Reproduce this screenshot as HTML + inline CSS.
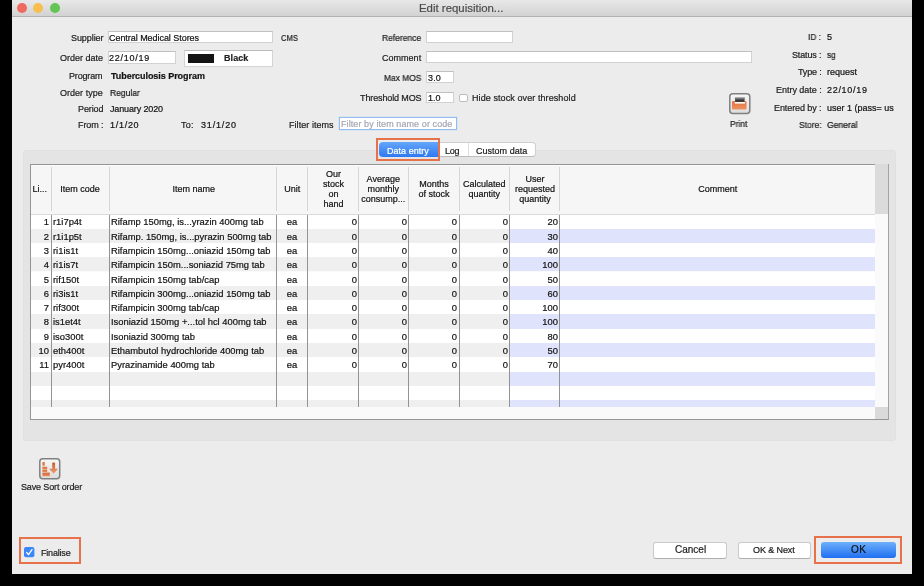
<!DOCTYPE html>
<html><head><meta charset="utf-8"><style>
html,body{margin:0;padding:0;}
body{width:924px;height:586px;background:#000;position:relative;overflow:hidden;font-family:"Liberation Sans",sans-serif;}
.r{position:absolute;}
.t{position:absolute;white-space:nowrap;will-change:transform;-webkit-text-stroke-width:0.2px;}
.hd{position:absolute;display:flex;align-items:center;justify-content:center;font-size:9px;line-height:10px;color:#111;box-sizing:border-box;will-change:transform;-webkit-text-stroke-width:0.2px}
.hd>div{width:100%}
</style></head><body>
<div class="r" style="left:12px;top:0px;width:900.00px;height:574.00px;background:#ececec"></div>
<div class="r" style="left:12px;top:0px;width:900.00px;height:17.00px;background:linear-gradient(#e8e8e8,#d2d2d2);border-bottom:1px solid #b2b2b2;box-sizing:border-box"></div>
<div class="r" style="left:16.50px;top:2.9px;width:10.2px;height:10.2px;border-radius:50%;background:#ef6a5e;"></div>
<div class="r" style="left:33.30px;top:2.9px;width:10.2px;height:10.2px;border-radius:50%;background:#f6bf50;"></div>
<div class="r" style="left:49.90px;top:2.9px;width:10.2px;height:10.2px;border-radius:50%;background:#62c554;"></div>
<div class="t" style="left:418.70px;top:3px;font-size:11.4px;line-height:11.4px;font-weight:400;color:#4b4b4b;letter-spacing:0.009px;">Edit requisition...</div>
<div class="t" style="left:70.80px;top:34px;font-size:9px;line-height:9px;font-weight:400;color:#1c1c1c;letter-spacing:-0.076px;">Supplier</div>
<div class="t" style="left:60.30px;top:54px;font-size:9px;line-height:9px;font-weight:400;color:#1c1c1c;letter-spacing:-0.002px;">Order date</div>
<div class="t" style="left:69.00px;top:72px;font-size:9px;line-height:9px;font-weight:400;color:#1c1c1c;letter-spacing:-0.162px;">Program</div>
<div class="t" style="left:60.30px;top:89px;font-size:9px;line-height:9px;font-weight:400;color:#1c1c1c;letter-spacing:0.024px;">Order type</div>
<div class="t" style="left:77.50px;top:105px;font-size:9px;line-height:9px;font-weight:400;color:#1c1c1c;letter-spacing:-0.102px;">Period</div>
<div class="t" style="left:77.50px;top:121px;font-size:9px;line-height:9px;font-weight:400;color:#1c1c1c;letter-spacing:-0.102px;">From :</div>
<div class="r" style="left:107.5px;top:31.3px;width:165.50px;height:12.10px;background:#fff;border:1px solid #d2d2d2;border-top-color:#c0c0c0;box-sizing:border-box"></div>
<div class="t" style="left:109.20px;top:34px;font-size:9px;line-height:9px;font-weight:400;color:#111111;letter-spacing:-0.047px;">Central Medical Stores</div>
<div class="t" style="left:281.30px;top:34px;font-size:9px;line-height:9px;font-weight:400;color:#1c1c1c;transform:scaleX(0.8509);transform-origin:0 0;">CMS</div>
<div class="r" style="left:107.5px;top:51.3px;width:68.00px;height:12.30px;background:#fff;border:1px solid #d2d2d2;border-top-color:#c0c0c0;box-sizing:border-box"></div>
<div class="t" style="left:109.20px;top:54px;font-size:9px;line-height:9px;font-weight:400;color:#111111;letter-spacing:0.756px;">22/10/19</div>
<div class="r" style="left:184px;top:50px;width:89.00px;height:17.00px;background:#fff;border:1px solid #d4d4d4;border-top-color:#bcbcbc;box-sizing:border-box"></div>
<div class="r" style="left:188px;top:54px;width:26.00px;height:9.00px;background:#141414"></div>
<div class="t" style="left:223.70px;top:54px;font-size:9px;line-height:9px;font-weight:700;color:#222;letter-spacing:0.068px;">Black</div>
<div class="t" style="left:110.80px;top:72px;font-size:9px;line-height:9px;font-weight:700;color:#111111;letter-spacing:-0.051px;">Tuberculosis Program</div>
<div class="t" style="left:109.70px;top:89px;font-size:9px;line-height:9px;font-weight:400;color:#111111;transform:scaleX(0.9460);transform-origin:0 0;">Regular</div>
<div class="t" style="left:109.70px;top:105px;font-size:9px;line-height:9px;font-weight:400;color:#111111;letter-spacing:-0.131px;">January 2020</div>
<div class="t" style="left:109.70px;top:121px;font-size:9px;line-height:9px;font-weight:400;color:#111111;letter-spacing:0.716px;">1/1/20</div>
<div class="t" style="left:180.80px;top:121px;font-size:9px;line-height:9px;font-weight:400;color:#1c1c1c;letter-spacing:0.265px;">To:</div>
<div class="t" style="left:200.80px;top:121px;font-size:9px;line-height:9px;font-weight:400;color:#111111;letter-spacing:0.823px;">31/1/20</div>
<div class="t" style="left:288.70px;top:121px;font-size:9px;line-height:9px;font-weight:400;color:#1c1c1c;letter-spacing:0.054px;">Filter items</div>
<div class="r" style="left:338.5px;top:117.4px;width:118.70px;height:12.90px;background:#fff;border:1px solid #94bbee;box-shadow:0 0 0 0.6px #cddff5;box-sizing:border-box"></div>
<div class="t" style="left:340.60px;top:120px;font-size:9px;line-height:9px;font-weight:400;color:#a3a6b3;letter-spacing:0.089px;">Filter by item name or code</div>
<div class="t" style="left:381.70px;top:34px;font-size:9px;line-height:9px;font-weight:400;color:#1c1c1c;transform:scaleX(0.9424);transform-origin:0 0;">Reference</div>
<div class="t" style="left:381.80px;top:54px;font-size:9px;line-height:9px;font-weight:400;color:#1c1c1c;letter-spacing:0.023px;">Comment</div>
<div class="t" style="left:383.70px;top:74px;font-size:9px;line-height:9px;font-weight:400;color:#1c1c1c;transform:scaleX(0.9334);transform-origin:0 0;">Max MOS</div>
<div class="t" style="left:359.70px;top:94px;font-size:9px;line-height:9px;font-weight:400;color:#1c1c1c;letter-spacing:-0.117px;">Threshold MOS</div>
<div class="r" style="left:426.3px;top:31.3px;width:86.70px;height:12.10px;background:#fff;border:1px solid #d2d2d2;border-top-color:#c0c0c0;box-sizing:border-box"></div>
<div class="r" style="left:426.3px;top:51.2px;width:325.70px;height:12.30px;background:#fff;border:1px solid #d2d2d2;border-top-color:#c0c0c0;box-sizing:border-box"></div>
<div class="r" style="left:426.3px;top:71.4px;width:27.30px;height:12.10px;background:#fff;border:1px solid #d2d2d2;border-top-color:#c0c0c0;box-sizing:border-box"></div>
<div class="t" style="left:427.50px;top:74px;font-size:9px;line-height:9px;font-weight:400;color:#111111;letter-spacing:0.145px;">3.0</div>
<div class="r" style="left:426.3px;top:91.6px;width:27.30px;height:11.80px;background:#fff;border:1px solid #d2d2d2;border-top-color:#c0c0c0;box-sizing:border-box"></div>
<div class="t" style="left:427.90px;top:94px;font-size:9px;line-height:9px;font-weight:400;color:#111111;letter-spacing:-0.055px;">1.0</div>
<div class="r" style="left:459.4px;top:93.8px;width:8.20px;height:7.80px;background:#fff;border:1px solid #bdbdbd;border-radius:2px;box-sizing:border-box"></div>
<div class="t" style="left:471.50px;top:94px;font-size:9px;line-height:9px;font-weight:400;color:#1c1c1c;letter-spacing:0.087px;">Hide stock over threshold</div>
<div class="t" style="left:808.30px;top:33px;font-size:9px;line-height:9px;font-weight:400;color:#1c1c1c;transform:scaleX(0.9259);transform-origin:0 0;">ID :</div>
<div class="t" style="left:826.60px;top:33px;font-size:9px;line-height:9px;font-weight:400;color:#111111;letter-spacing:0.000px;">5</div>
<div class="t" style="left:791.80px;top:51px;font-size:9px;line-height:9px;font-weight:400;color:#1c1c1c;letter-spacing:-0.144px;">Status :</div>
<div class="t" style="left:826.60px;top:51px;font-size:9px;line-height:9px;font-weight:400;color:#111111;transform:scaleX(0.9119);transform-origin:0 0;">sg</div>
<div class="t" style="left:797.60px;top:68px;font-size:9px;line-height:9px;font-weight:400;color:#1c1c1c;letter-spacing:-0.156px;">Type :</div>
<div class="t" style="left:826.60px;top:68px;font-size:9px;line-height:9px;font-weight:400;color:#111111;letter-spacing:0.007px;">request</div>
<div class="t" style="left:775.60px;top:86px;font-size:9px;line-height:9px;font-weight:400;color:#1c1c1c;letter-spacing:-0.026px;">Entry date :</div>
<div class="t" style="left:826.60px;top:86px;font-size:9px;line-height:9px;font-weight:400;color:#111111;letter-spacing:0.699px;">22/10/19</div>
<div class="t" style="left:773.70px;top:104px;font-size:9px;line-height:9px;font-weight:400;color:#1c1c1c;letter-spacing:-0.083px;">Entered by :</div>
<div class="t" style="left:826.60px;top:104px;width:300px;font-size:9px;line-height:9px;font-weight:400;color:#111111;text-align:left;width:67px;overflow:hidden">user 1 (pass= us</div>
<div class="t" style="left:798.60px;top:121px;font-size:9px;line-height:9px;font-weight:400;color:#1c1c1c;transform:scaleX(0.9447);transform-origin:0 0;">Store:</div>
<div class="t" style="left:826.60px;top:121px;font-size:9px;line-height:9px;font-weight:400;color:#111111;transform:scaleX(0.9519);transform-origin:0 0;">General</div>
<svg class="r" style="left:729px;top:93px" width="22" height="22" viewBox="0 0 22 22">
<defs><linearGradient id="bx" x1="0" y1="0" x2="0" y2="1"><stop offset="0" stop-color="#f7f7f7"/><stop offset="1" stop-color="#dcdcdc"/></linearGradient>
<linearGradient id="sl" x1="0" y1="0" x2="0" y2="1"><stop offset="0" stop-color="#a0a0a0"/><stop offset="1" stop-color="#0e0e0e"/></linearGradient>
<linearGradient id="or" x1="0" y1="0" x2="0" y2="1"><stop offset="0" stop-color="#e27440"/><stop offset="1" stop-color="#ee9263"/></linearGradient></defs>
<rect x="0.8" y="0.8" width="20" height="19.8" rx="3" fill="url(#bx)" stroke="#808080" stroke-width="1.5"/>
<rect x="3" y="8" width="14.5" height="8.6" rx="1" fill="url(#or)"/>
<rect x="5.8" y="8.7" width="10.1" height="1.9" fill="#fff"/>
<path d="M5.8 4.2 H15.9 L15.5 8.7 H6.2 Z" fill="url(#sl)"/>
</svg>
<div class="t" style="left:730.40px;top:120px;font-size:9px;line-height:9px;font-weight:400;color:#1c1c1c;transform:scaleX(0.9385);transform-origin:0 0;">Print</div>
<div class="r" style="left:22.5px;top:149.6px;width:873.10px;height:291.00px;background:#e4e4e4;border-radius:4px;box-shadow:inset 0 0 0 1px #e0e0e0"></div>
<div class="r" style="left:437px;top:142px;width:99.00px;height:15.00px;background:#fff;border:1px solid #cfcfcf;border-bottom-color:#bdbdbd;border-radius:0 4px 4px 0;box-sizing:border-box"></div>
<div class="r" style="left:468px;top:143px;width:1.00px;height:13.00px;background:#dedede"></div>
<div class="r" style="left:379px;top:142px;width:59.00px;height:15.00px;background:linear-gradient(#64a6fa,#2f78f2);border-radius:4px 0 0 4px"></div>
<div class="t" style="left:386.60px;top:147px;font-size:9px;line-height:9px;font-weight:400;color:#fff;letter-spacing:0.034px;">Data entry</div>
<div class="t" style="left:445.00px;top:147px;font-size:9px;line-height:9px;font-weight:400;color:#1a1a1a;letter-spacing:-0.215px;">Log</div>
<div class="t" style="left:476.20px;top:147px;font-size:9px;line-height:9px;font-weight:400;color:#1a1a1a;letter-spacing:0.017px;">Custom data</div>
<div class="r" style="left:376px;top:138px;width:64.00px;height:23.00px;border:2px solid #e6714a;box-sizing:border-box"></div>
<div class="r" style="left:30px;top:164px;width:845.00px;height:256.00px;background:#fafafa;border:1px solid #959595;border-right:none;box-sizing:border-box"></div>
<div class="r" style="left:875px;top:164px;width:14.00px;height:256.00px;background:#fafafa;border-right:1.5px solid #a3a3a3;border-bottom:1px solid #959595;box-sizing:border-box"></div>
<div class="r" style="left:31px;top:165px;width:844.00px;height:49.00px;background:#f6f6f6"></div>
<div class="r" style="left:31px;top:165px;width:844.00px;height:1.00px;background:#fbfbfb"></div>
<div class="r" style="left:875px;top:164px;width:12.50px;height:50.00px;background:#dbdbdb"></div>
<div class="r" style="left:50.8px;top:167px;width:1.00px;height:44.00px;background:#d6d6d6"></div>
<div class="r" style="left:109.0px;top:167px;width:1.00px;height:44.00px;background:#d6d6d6"></div>
<div class="r" style="left:276.3px;top:167px;width:1.00px;height:44.00px;background:#d6d6d6"></div>
<div class="r" style="left:307.0px;top:167px;width:1.00px;height:44.00px;background:#d6d6d6"></div>
<div class="r" style="left:357.8px;top:167px;width:1.00px;height:44.00px;background:#d6d6d6"></div>
<div class="r" style="left:408.3px;top:167px;width:1.00px;height:44.00px;background:#d6d6d6"></div>
<div class="r" style="left:458.5px;top:167px;width:1.00px;height:44.00px;background:#d6d6d6"></div>
<div class="r" style="left:509.0px;top:167px;width:1.00px;height:44.00px;background:#d6d6d6"></div>
<div class="r" style="left:559.0px;top:167px;width:1.00px;height:44.00px;background:#d6d6d6"></div>
<div class="hd" style="left:31px;top:165px;width:20.299999999999997px;height:48px;text-align:left;padding-left:1.5px;"><div>Li...</div></div>
<div class="hd" style="left:51.3px;top:165px;width:58.2px;height:48px;text-align:center;"><div>Item code</div></div>
<div class="hd" style="left:109.5px;top:165px;width:167.3px;height:48px;text-align:center;"><div>Item name</div></div>
<div class="hd" style="left:276.8px;top:165px;width:30.69999999999999px;height:48px;text-align:center;"><div>Unit</div></div>
<div class="hd" style="left:307.5px;top:165px;width:50.80000000000001px;height:48px;text-align:center;"><div>Our<br>stock<br>on<br>hand</div></div>
<div class="hd" style="left:358.3px;top:165px;width:50.5px;height:48px;text-align:center;"><div>Average<br>monthly<br>consump...</div></div>
<div class="hd" style="left:408.8px;top:165px;width:50.19999999999999px;height:48px;text-align:center;"><div>Months<br>of stock</div></div>
<div class="hd" style="left:459px;top:165px;width:50.5px;height:48px;text-align:center;"><div>Calculated<br>quantity</div></div>
<div class="hd" style="left:509.5px;top:165px;width:50.0px;height:48px;text-align:center;"><div>User<br>requested<br>quantity</div></div>
<div class="hd" style="left:559.5px;top:165px;width:315.5px;height:48px;text-align:center;"><div>Comment</div></div>
<div class="r" style="left:31px;top:214px;width:844px;height:193px;overflow:hidden">
<div class="r" style="left:0;top:0.30px;width:478.5px;height:14.30px;background:#ffffff"></div>
<div class="r" style="left:478.5px;top:0.30px;width:365.5px;height:14.30px;background:#ffffff"></div>
<div class="r" style="left:0;top:14.60px;width:478.5px;height:14.30px;background:#efefef"></div>
<div class="r" style="left:478.5px;top:14.60px;width:365.5px;height:14.30px;background:#dfe3fb"></div>
<div class="r" style="left:0;top:28.90px;width:478.5px;height:14.30px;background:#ffffff"></div>
<div class="r" style="left:478.5px;top:28.90px;width:365.5px;height:14.30px;background:#ffffff"></div>
<div class="r" style="left:0;top:43.20px;width:478.5px;height:14.30px;background:#efefef"></div>
<div class="r" style="left:478.5px;top:43.20px;width:365.5px;height:14.30px;background:#dfe3fb"></div>
<div class="r" style="left:0;top:57.50px;width:478.5px;height:14.30px;background:#ffffff"></div>
<div class="r" style="left:478.5px;top:57.50px;width:365.5px;height:14.30px;background:#ffffff"></div>
<div class="r" style="left:0;top:71.80px;width:478.5px;height:14.30px;background:#efefef"></div>
<div class="r" style="left:478.5px;top:71.80px;width:365.5px;height:14.30px;background:#dfe3fb"></div>
<div class="r" style="left:0;top:86.10px;width:478.5px;height:14.30px;background:#ffffff"></div>
<div class="r" style="left:478.5px;top:86.10px;width:365.5px;height:14.30px;background:#ffffff"></div>
<div class="r" style="left:0;top:100.40px;width:478.5px;height:14.30px;background:#efefef"></div>
<div class="r" style="left:478.5px;top:100.40px;width:365.5px;height:14.30px;background:#dfe3fb"></div>
<div class="r" style="left:0;top:114.70px;width:478.5px;height:14.30px;background:#ffffff"></div>
<div class="r" style="left:478.5px;top:114.70px;width:365.5px;height:14.30px;background:#ffffff"></div>
<div class="r" style="left:0;top:129.00px;width:478.5px;height:14.30px;background:#efefef"></div>
<div class="r" style="left:478.5px;top:129.00px;width:365.5px;height:14.30px;background:#dfe3fb"></div>
<div class="r" style="left:0;top:143.30px;width:478.5px;height:14.30px;background:#ffffff"></div>
<div class="r" style="left:478.5px;top:143.30px;width:365.5px;height:14.30px;background:#ffffff"></div>
<div class="r" style="left:0;top:157.60px;width:478.5px;height:14.30px;background:#efefef"></div>
<div class="r" style="left:478.5px;top:157.60px;width:365.5px;height:14.30px;background:#dfe3fb"></div>
<div class="r" style="left:0;top:171.90px;width:478.5px;height:14.30px;background:#ffffff"></div>
<div class="r" style="left:478.5px;top:171.90px;width:365.5px;height:14.30px;background:#ffffff"></div>
<div class="r" style="left:0;top:186.20px;width:478.5px;height:14.30px;background:#efefef"></div>
<div class="r" style="left:478.5px;top:186.20px;width:365.5px;height:14.30px;background:#dfe3fb"></div>
<div class="r" style="left:19.80px;top:0;width:1px;height:193px;background:#939393"></div>
<div class="r" style="left:78.00px;top:0;width:1px;height:193px;background:#939393"></div>
<div class="r" style="left:245.30px;top:0;width:1px;height:193px;background:#939393"></div>
<div class="r" style="left:276.00px;top:0;width:1px;height:193px;background:#939393"></div>
<div class="r" style="left:326.80px;top:0;width:1px;height:193px;background:#939393"></div>
<div class="r" style="left:377.30px;top:0;width:1px;height:193px;background:#939393"></div>
<div class="r" style="left:427.50px;top:0;width:1px;height:193px;background:#939393"></div>
<div class="r" style="left:478.00px;top:0;width:1px;height:193px;background:#939393"></div>
<div class="r" style="left:528.00px;top:0;width:1px;height:193px;background:#939393"></div>
</div>
<div class="r" style="left:31px;top:214px;width:844.00px;height:1.00px;background:#d9d9d9"></div>
<div class="t" style="left:31.40px;top:217px;width:18px;font-size:9.4px;line-height:9.4px;font-weight:400;color:#111111;text-align:right;">1</div>
<div class="t" style="left:53.30px;top:217px;width:300px;font-size:9.4px;line-height:9.4px;font-weight:400;color:#111111;text-align:left;">r1i7p4t</div>
<div class="t" style="left:111.30px;top:217px;width:300px;font-size:9.4px;line-height:9.4px;font-weight:400;color:#111111;text-align:left;">Rifamp 150mg, is...yrazin 400mg tab</div>
<div class="t" style="left:277.20px;top:217px;width:30px;font-size:9.4px;line-height:9.4px;font-weight:400;color:#111111;text-align:center;">ea</div>
<div class="t" style="left:326.60px;top:217px;width:30px;font-size:9.4px;line-height:9.4px;font-weight:400;color:#111111;text-align:right;">0</div>
<div class="t" style="left:377.00px;top:217px;width:30px;font-size:9.4px;line-height:9.4px;font-weight:400;color:#111111;text-align:right;">0</div>
<div class="t" style="left:427.20px;top:217px;width:30px;font-size:9.4px;line-height:9.4px;font-weight:400;color:#111111;text-align:right;">0</div>
<div class="t" style="left:477.80px;top:217px;width:30px;font-size:9.4px;line-height:9.4px;font-weight:400;color:#111111;text-align:right;">0</div>
<div class="t" style="left:518.30px;top:217px;width:40px;font-size:9.4px;line-height:9.4px;font-weight:400;color:#111111;text-align:right;">20</div>
<div class="t" style="left:31.40px;top:232px;width:18px;font-size:9.4px;line-height:9.4px;font-weight:400;color:#111111;text-align:right;">2</div>
<div class="t" style="left:53.30px;top:232px;width:300px;font-size:9.4px;line-height:9.4px;font-weight:400;color:#111111;text-align:left;">r1i1p5t</div>
<div class="t" style="left:111.30px;top:232px;width:300px;font-size:9.4px;line-height:9.4px;font-weight:400;color:#111111;text-align:left;">Rifamp. 150mg, is...pyrazin 500mg tab</div>
<div class="t" style="left:277.20px;top:232px;width:30px;font-size:9.4px;line-height:9.4px;font-weight:400;color:#111111;text-align:center;">ea</div>
<div class="t" style="left:326.60px;top:232px;width:30px;font-size:9.4px;line-height:9.4px;font-weight:400;color:#111111;text-align:right;">0</div>
<div class="t" style="left:377.00px;top:232px;width:30px;font-size:9.4px;line-height:9.4px;font-weight:400;color:#111111;text-align:right;">0</div>
<div class="t" style="left:427.20px;top:232px;width:30px;font-size:9.4px;line-height:9.4px;font-weight:400;color:#111111;text-align:right;">0</div>
<div class="t" style="left:477.80px;top:232px;width:30px;font-size:9.4px;line-height:9.4px;font-weight:400;color:#111111;text-align:right;">0</div>
<div class="t" style="left:518.30px;top:232px;width:40px;font-size:9.4px;line-height:9.4px;font-weight:400;color:#111111;text-align:right;">30</div>
<div class="t" style="left:31.40px;top:246px;width:18px;font-size:9.4px;line-height:9.4px;font-weight:400;color:#111111;text-align:right;">3</div>
<div class="t" style="left:53.30px;top:246px;width:300px;font-size:9.4px;line-height:9.4px;font-weight:400;color:#111111;text-align:left;">ri1is1t</div>
<div class="t" style="left:111.30px;top:246px;width:300px;font-size:9.4px;line-height:9.4px;font-weight:400;color:#111111;text-align:left;">Rifampicin 150mg...oniazid 150mg tab</div>
<div class="t" style="left:277.20px;top:246px;width:30px;font-size:9.4px;line-height:9.4px;font-weight:400;color:#111111;text-align:center;">ea</div>
<div class="t" style="left:326.60px;top:246px;width:30px;font-size:9.4px;line-height:9.4px;font-weight:400;color:#111111;text-align:right;">0</div>
<div class="t" style="left:377.00px;top:246px;width:30px;font-size:9.4px;line-height:9.4px;font-weight:400;color:#111111;text-align:right;">0</div>
<div class="t" style="left:427.20px;top:246px;width:30px;font-size:9.4px;line-height:9.4px;font-weight:400;color:#111111;text-align:right;">0</div>
<div class="t" style="left:477.80px;top:246px;width:30px;font-size:9.4px;line-height:9.4px;font-weight:400;color:#111111;text-align:right;">0</div>
<div class="t" style="left:518.30px;top:246px;width:40px;font-size:9.4px;line-height:9.4px;font-weight:400;color:#111111;text-align:right;">40</div>
<div class="t" style="left:31.40px;top:260px;width:18px;font-size:9.4px;line-height:9.4px;font-weight:400;color:#111111;text-align:right;">4</div>
<div class="t" style="left:53.30px;top:260px;width:300px;font-size:9.4px;line-height:9.4px;font-weight:400;color:#111111;text-align:left;">ri1is7t</div>
<div class="t" style="left:111.30px;top:260px;width:300px;font-size:9.4px;line-height:9.4px;font-weight:400;color:#111111;text-align:left;">Rifampicin 150m...soniazid 75mg tab</div>
<div class="t" style="left:277.20px;top:260px;width:30px;font-size:9.4px;line-height:9.4px;font-weight:400;color:#111111;text-align:center;">ea</div>
<div class="t" style="left:326.60px;top:260px;width:30px;font-size:9.4px;line-height:9.4px;font-weight:400;color:#111111;text-align:right;">0</div>
<div class="t" style="left:377.00px;top:260px;width:30px;font-size:9.4px;line-height:9.4px;font-weight:400;color:#111111;text-align:right;">0</div>
<div class="t" style="left:427.20px;top:260px;width:30px;font-size:9.4px;line-height:9.4px;font-weight:400;color:#111111;text-align:right;">0</div>
<div class="t" style="left:477.80px;top:260px;width:30px;font-size:9.4px;line-height:9.4px;font-weight:400;color:#111111;text-align:right;">0</div>
<div class="t" style="left:518.30px;top:260px;width:40px;font-size:9.4px;line-height:9.4px;font-weight:400;color:#111111;text-align:right;">100</div>
<div class="t" style="left:31.40px;top:275px;width:18px;font-size:9.4px;line-height:9.4px;font-weight:400;color:#111111;text-align:right;">5</div>
<div class="t" style="left:53.30px;top:275px;width:300px;font-size:9.4px;line-height:9.4px;font-weight:400;color:#111111;text-align:left;">rif150t</div>
<div class="t" style="left:111.30px;top:275px;width:300px;font-size:9.4px;line-height:9.4px;font-weight:400;color:#111111;text-align:left;">Rifampicin 150mg tab/cap</div>
<div class="t" style="left:277.20px;top:275px;width:30px;font-size:9.4px;line-height:9.4px;font-weight:400;color:#111111;text-align:center;">ea</div>
<div class="t" style="left:326.60px;top:275px;width:30px;font-size:9.4px;line-height:9.4px;font-weight:400;color:#111111;text-align:right;">0</div>
<div class="t" style="left:377.00px;top:275px;width:30px;font-size:9.4px;line-height:9.4px;font-weight:400;color:#111111;text-align:right;">0</div>
<div class="t" style="left:427.20px;top:275px;width:30px;font-size:9.4px;line-height:9.4px;font-weight:400;color:#111111;text-align:right;">0</div>
<div class="t" style="left:477.80px;top:275px;width:30px;font-size:9.4px;line-height:9.4px;font-weight:400;color:#111111;text-align:right;">0</div>
<div class="t" style="left:518.30px;top:275px;width:40px;font-size:9.4px;line-height:9.4px;font-weight:400;color:#111111;text-align:right;">50</div>
<div class="t" style="left:31.40px;top:289px;width:18px;font-size:9.4px;line-height:9.4px;font-weight:400;color:#111111;text-align:right;">6</div>
<div class="t" style="left:53.30px;top:289px;width:300px;font-size:9.4px;line-height:9.4px;font-weight:400;color:#111111;text-align:left;">ri3is1t</div>
<div class="t" style="left:111.30px;top:289px;width:300px;font-size:9.4px;line-height:9.4px;font-weight:400;color:#111111;text-align:left;">Rifampicin 300mg...oniazid 150mg tab</div>
<div class="t" style="left:277.20px;top:289px;width:30px;font-size:9.4px;line-height:9.4px;font-weight:400;color:#111111;text-align:center;">ea</div>
<div class="t" style="left:326.60px;top:289px;width:30px;font-size:9.4px;line-height:9.4px;font-weight:400;color:#111111;text-align:right;">0</div>
<div class="t" style="left:377.00px;top:289px;width:30px;font-size:9.4px;line-height:9.4px;font-weight:400;color:#111111;text-align:right;">0</div>
<div class="t" style="left:427.20px;top:289px;width:30px;font-size:9.4px;line-height:9.4px;font-weight:400;color:#111111;text-align:right;">0</div>
<div class="t" style="left:477.80px;top:289px;width:30px;font-size:9.4px;line-height:9.4px;font-weight:400;color:#111111;text-align:right;">0</div>
<div class="t" style="left:518.30px;top:289px;width:40px;font-size:9.4px;line-height:9.4px;font-weight:400;color:#111111;text-align:right;">60</div>
<div class="t" style="left:31.40px;top:303px;width:18px;font-size:9.4px;line-height:9.4px;font-weight:400;color:#111111;text-align:right;">7</div>
<div class="t" style="left:53.30px;top:303px;width:300px;font-size:9.4px;line-height:9.4px;font-weight:400;color:#111111;text-align:left;">rif300t</div>
<div class="t" style="left:111.30px;top:303px;width:300px;font-size:9.4px;line-height:9.4px;font-weight:400;color:#111111;text-align:left;">Rifampicin 300mg tab/cap</div>
<div class="t" style="left:277.20px;top:303px;width:30px;font-size:9.4px;line-height:9.4px;font-weight:400;color:#111111;text-align:center;">ea</div>
<div class="t" style="left:326.60px;top:303px;width:30px;font-size:9.4px;line-height:9.4px;font-weight:400;color:#111111;text-align:right;">0</div>
<div class="t" style="left:377.00px;top:303px;width:30px;font-size:9.4px;line-height:9.4px;font-weight:400;color:#111111;text-align:right;">0</div>
<div class="t" style="left:427.20px;top:303px;width:30px;font-size:9.4px;line-height:9.4px;font-weight:400;color:#111111;text-align:right;">0</div>
<div class="t" style="left:477.80px;top:303px;width:30px;font-size:9.4px;line-height:9.4px;font-weight:400;color:#111111;text-align:right;">0</div>
<div class="t" style="left:518.30px;top:303px;width:40px;font-size:9.4px;line-height:9.4px;font-weight:400;color:#111111;text-align:right;">100</div>
<div class="t" style="left:31.40px;top:317px;width:18px;font-size:9.4px;line-height:9.4px;font-weight:400;color:#111111;text-align:right;">8</div>
<div class="t" style="left:53.30px;top:317px;width:300px;font-size:9.4px;line-height:9.4px;font-weight:400;color:#111111;text-align:left;">is1et4t</div>
<div class="t" style="left:111.30px;top:317px;width:300px;font-size:9.4px;line-height:9.4px;font-weight:400;color:#111111;text-align:left;">Isoniazid 150mg +...tol hcl 400mg tab</div>
<div class="t" style="left:277.20px;top:317px;width:30px;font-size:9.4px;line-height:9.4px;font-weight:400;color:#111111;text-align:center;">ea</div>
<div class="t" style="left:326.60px;top:317px;width:30px;font-size:9.4px;line-height:9.4px;font-weight:400;color:#111111;text-align:right;">0</div>
<div class="t" style="left:377.00px;top:317px;width:30px;font-size:9.4px;line-height:9.4px;font-weight:400;color:#111111;text-align:right;">0</div>
<div class="t" style="left:427.20px;top:317px;width:30px;font-size:9.4px;line-height:9.4px;font-weight:400;color:#111111;text-align:right;">0</div>
<div class="t" style="left:477.80px;top:317px;width:30px;font-size:9.4px;line-height:9.4px;font-weight:400;color:#111111;text-align:right;">0</div>
<div class="t" style="left:518.30px;top:317px;width:40px;font-size:9.4px;line-height:9.4px;font-weight:400;color:#111111;text-align:right;">100</div>
<div class="t" style="left:31.40px;top:332px;width:18px;font-size:9.4px;line-height:9.4px;font-weight:400;color:#111111;text-align:right;">9</div>
<div class="t" style="left:53.30px;top:332px;width:300px;font-size:9.4px;line-height:9.4px;font-weight:400;color:#111111;text-align:left;">iso300t</div>
<div class="t" style="left:111.30px;top:332px;width:300px;font-size:9.4px;line-height:9.4px;font-weight:400;color:#111111;text-align:left;">Isoniazid 300mg tab</div>
<div class="t" style="left:277.20px;top:332px;width:30px;font-size:9.4px;line-height:9.4px;font-weight:400;color:#111111;text-align:center;">ea</div>
<div class="t" style="left:326.60px;top:332px;width:30px;font-size:9.4px;line-height:9.4px;font-weight:400;color:#111111;text-align:right;">0</div>
<div class="t" style="left:377.00px;top:332px;width:30px;font-size:9.4px;line-height:9.4px;font-weight:400;color:#111111;text-align:right;">0</div>
<div class="t" style="left:427.20px;top:332px;width:30px;font-size:9.4px;line-height:9.4px;font-weight:400;color:#111111;text-align:right;">0</div>
<div class="t" style="left:477.80px;top:332px;width:30px;font-size:9.4px;line-height:9.4px;font-weight:400;color:#111111;text-align:right;">0</div>
<div class="t" style="left:518.30px;top:332px;width:40px;font-size:9.4px;line-height:9.4px;font-weight:400;color:#111111;text-align:right;">80</div>
<div class="t" style="left:31.40px;top:346px;width:18px;font-size:9.4px;line-height:9.4px;font-weight:400;color:#111111;text-align:right;">10</div>
<div class="t" style="left:53.30px;top:346px;width:300px;font-size:9.4px;line-height:9.4px;font-weight:400;color:#111111;text-align:left;">eth400t</div>
<div class="t" style="left:111.30px;top:346px;width:300px;font-size:9.4px;line-height:9.4px;font-weight:400;color:#111111;text-align:left;">Ethambutol hydrochloride 400mg tab</div>
<div class="t" style="left:277.20px;top:346px;width:30px;font-size:9.4px;line-height:9.4px;font-weight:400;color:#111111;text-align:center;">ea</div>
<div class="t" style="left:326.60px;top:346px;width:30px;font-size:9.4px;line-height:9.4px;font-weight:400;color:#111111;text-align:right;">0</div>
<div class="t" style="left:377.00px;top:346px;width:30px;font-size:9.4px;line-height:9.4px;font-weight:400;color:#111111;text-align:right;">0</div>
<div class="t" style="left:427.20px;top:346px;width:30px;font-size:9.4px;line-height:9.4px;font-weight:400;color:#111111;text-align:right;">0</div>
<div class="t" style="left:477.80px;top:346px;width:30px;font-size:9.4px;line-height:9.4px;font-weight:400;color:#111111;text-align:right;">0</div>
<div class="t" style="left:518.30px;top:346px;width:40px;font-size:9.4px;line-height:9.4px;font-weight:400;color:#111111;text-align:right;">50</div>
<div class="t" style="left:31.40px;top:360px;width:18px;font-size:9.4px;line-height:9.4px;font-weight:400;color:#111111;text-align:right;">11</div>
<div class="t" style="left:53.30px;top:360px;width:300px;font-size:9.4px;line-height:9.4px;font-weight:400;color:#111111;text-align:left;">pyr400t</div>
<div class="t" style="left:111.30px;top:360px;width:300px;font-size:9.4px;line-height:9.4px;font-weight:400;color:#111111;text-align:left;">Pyrazinamide 400mg tab</div>
<div class="t" style="left:277.20px;top:360px;width:30px;font-size:9.4px;line-height:9.4px;font-weight:400;color:#111111;text-align:center;">ea</div>
<div class="t" style="left:326.60px;top:360px;width:30px;font-size:9.4px;line-height:9.4px;font-weight:400;color:#111111;text-align:right;">0</div>
<div class="t" style="left:377.00px;top:360px;width:30px;font-size:9.4px;line-height:9.4px;font-weight:400;color:#111111;text-align:right;">0</div>
<div class="t" style="left:427.20px;top:360px;width:30px;font-size:9.4px;line-height:9.4px;font-weight:400;color:#111111;text-align:right;">0</div>
<div class="t" style="left:477.80px;top:360px;width:30px;font-size:9.4px;line-height:9.4px;font-weight:400;color:#111111;text-align:right;">0</div>
<div class="t" style="left:518.30px;top:360px;width:40px;font-size:9.4px;line-height:9.4px;font-weight:400;color:#111111;text-align:right;">70</div>
<div class="r" style="left:875px;top:214px;width:12.50px;height:193.00px;background:#fafafa"></div>
<div class="r" style="left:31px;top:407px;width:844.00px;height:12.00px;background:#fafafa"></div>
<div class="r" style="left:875px;top:407px;width:12.50px;height:12.00px;background:#dadada"></div>
<svg class="r" style="left:39.3px;top:458.1px" width="22" height="22" viewBox="0 0 22 22">
<defs><linearGradient id="bx2" x1="0" y1="0" x2="0" y2="1"><stop offset="0" stop-color="#f7f7f7"/><stop offset="1" stop-color="#dcdcdc"/></linearGradient>
<linearGradient id="or2" x1="0" y1="0" x2="0" y2="1"><stop offset="0" stop-color="#c95a2c"/><stop offset="1" stop-color="#f0a078"/></linearGradient>
<linearGradient id="or3" x1="0" y1="0" x2="0" y2="1"><stop offset="0" stop-color="#d66a3a"/><stop offset="1" stop-color="#ea8a5a"/></linearGradient></defs>
<rect x="0.8" y="0.8" width="19.9" height="20" rx="3" fill="url(#bx2)" stroke="#808080" stroke-width="1.5"/>
<rect x="3.4" y="4.1" width="2.4" height="3.8" rx="0.6" fill="url(#or3)"/>
<rect x="3.4" y="8.8" width="4.8" height="2.4" fill="url(#or3)"/>
<rect x="3.4" y="11.6" width="4.8" height="2.4" fill="url(#or3)"/>
<rect x="3.4" y="14.6" width="7.4" height="3.6" fill="url(#or3)"/>
<path d="M13.2 4.8 Q14.65 4.2 16.1 4.8 V10.7 H19 L14.65 15.7 L10.1 10.7 H13.2 Z" fill="url(#or2)"/>
</svg>
<div class="t" style="left:20.90px;top:483px;font-size:9px;line-height:9px;font-weight:400;color:#1c1c1c;letter-spacing:-0.129px;">Save Sort order</div>
<div class="r" style="left:19px;top:537px;width:62.00px;height:27.00px;border:2px solid #e6714a;box-sizing:border-box"></div>
<svg class="r" style="left:24px;top:546.8px" width="11" height="11" viewBox="0 0 11 11"><rect x="0" y="0" width="10.4" height="10.2" rx="2" fill="#3d86f7"/><path d="M2.6 5.4 L4.5 7.6 L8 2.6" fill="none" stroke="#fff" stroke-width="1.3" stroke-linecap="round" stroke-linejoin="round"/></svg>
<div class="t" style="left:40.60px;top:549px;font-size:9px;line-height:9px;font-weight:400;color:#1c1c1c;letter-spacing:-0.193px;">Finalise</div>
<div class="r" style="left:653px;top:542px;width:74.00px;height:16.50px;background:#fff;border:1px solid #cacaca;border-bottom-color:#b0b0b0;border-radius:3px;box-sizing:border-box"></div>
<div class="t" style="left:674.80px;top:545px;font-size:10px;line-height:10px;font-weight:400;color:#1a1a1a;letter-spacing:0.000px;">Cancel</div>
<div class="r" style="left:737.5px;top:542px;width:73.50px;height:16.50px;background:#fff;border:1px solid #cacaca;border-bottom-color:#b0b0b0;border-radius:3px;box-sizing:border-box"></div>
<div class="t" style="left:753.20px;top:546px;font-size:9px;line-height:9px;font-weight:400;color:#1a1a1a;letter-spacing:-0.096px;">OK &amp; Next</div>
<div class="r" style="left:821px;top:541.5px;width:74.50px;height:16.50px;background:linear-gradient(#6db0fb,#1f6ff1);border-radius:3px"></div>
<div class="t" style="left:850.70px;top:545px;font-size:10px;line-height:10px;font-weight:400;color:#111;letter-spacing:0.400px;">OK</div>
<div class="r" style="left:814px;top:536px;width:87.50px;height:27.50px;border:2px solid #e6714a;box-sizing:border-box"></div>
</body></html>
